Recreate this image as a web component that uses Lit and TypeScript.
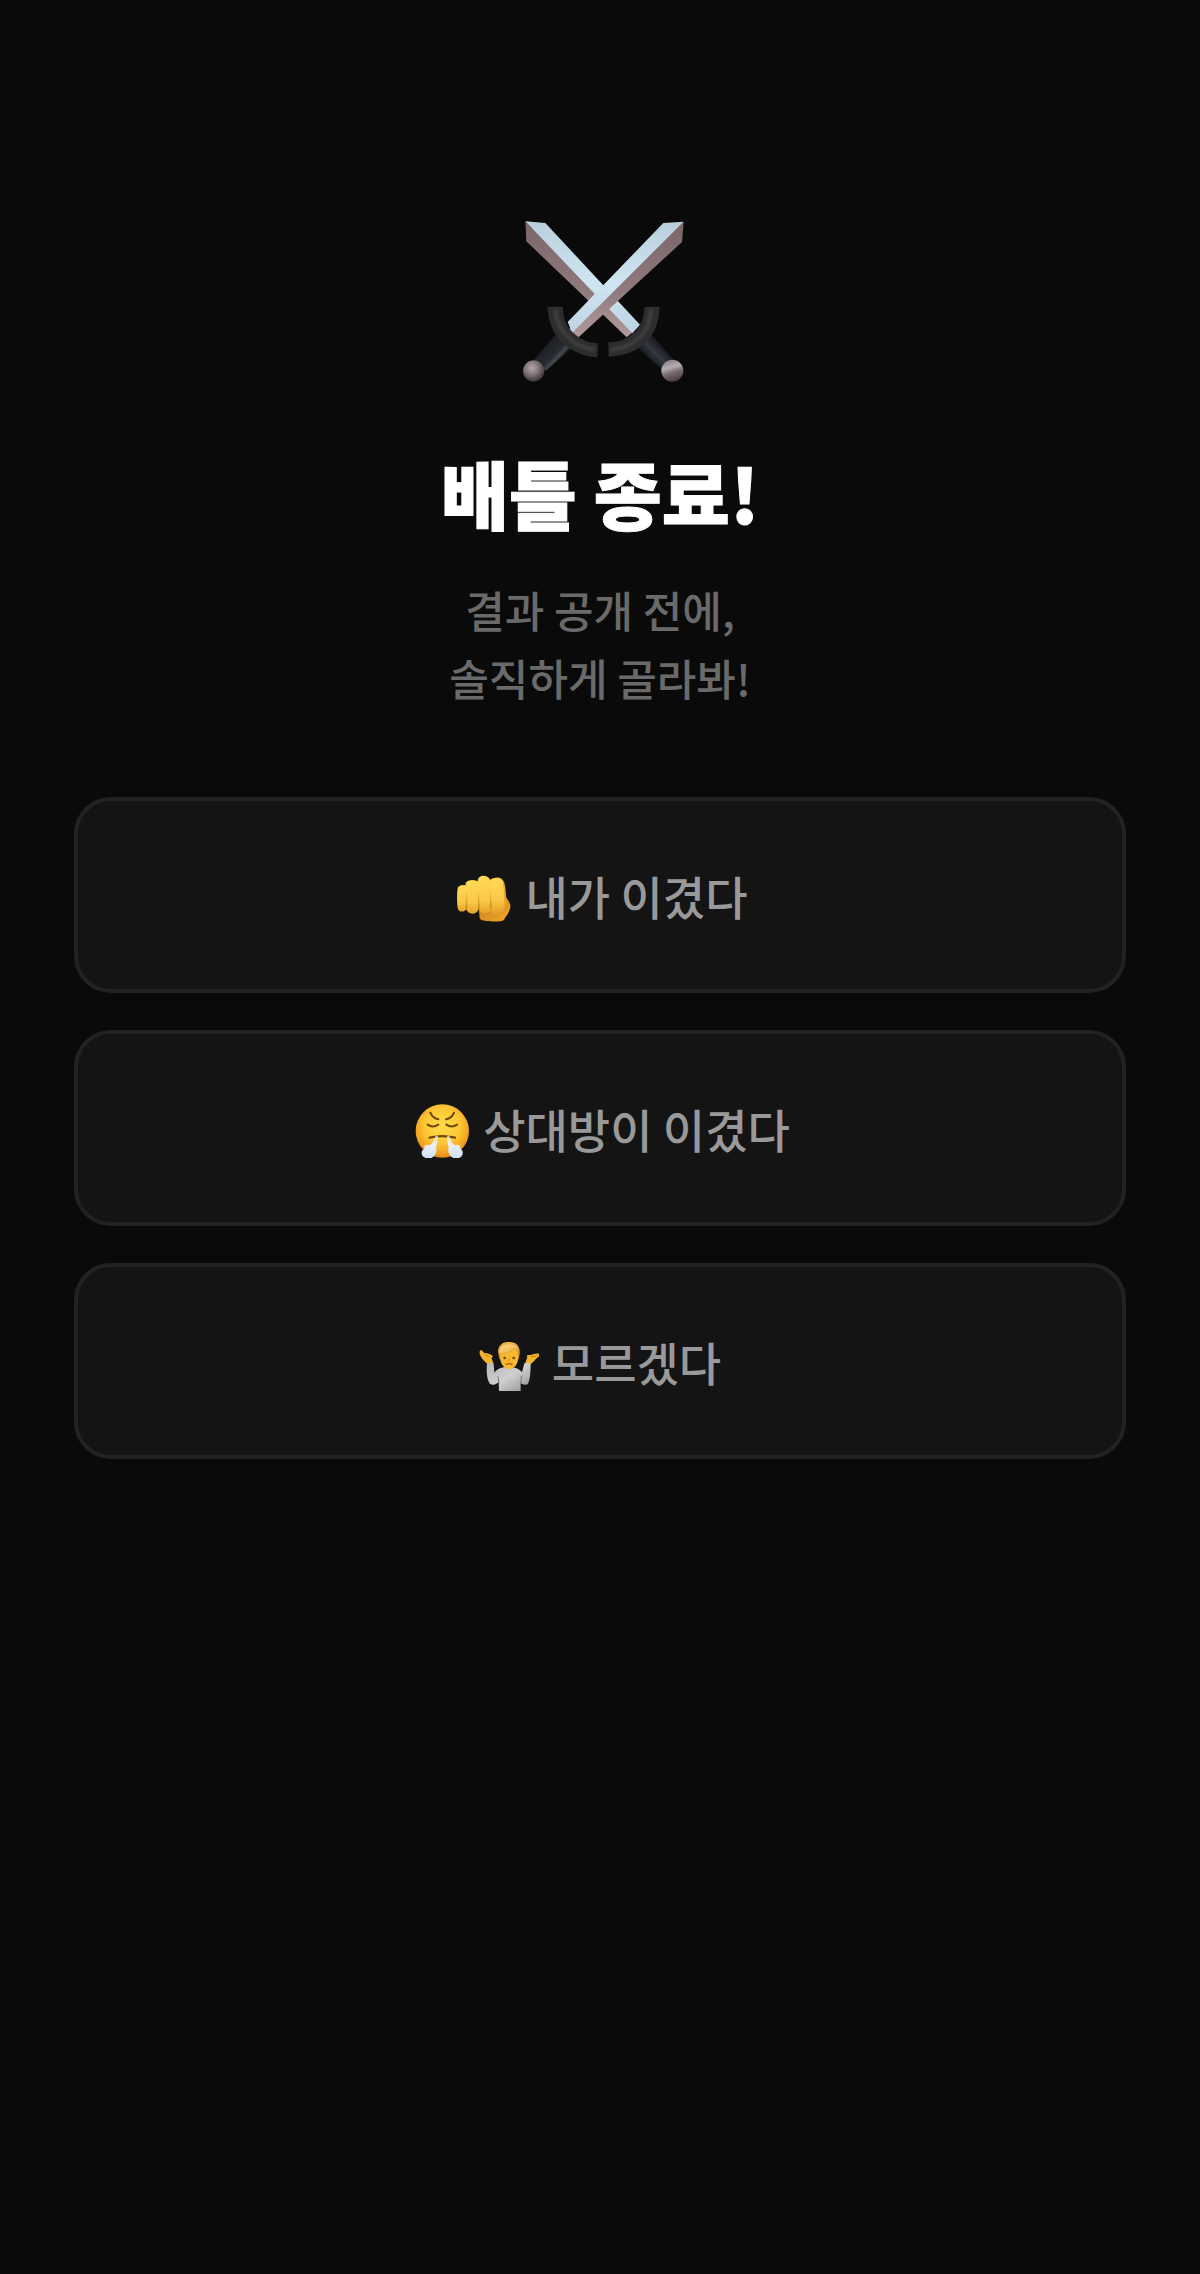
import { LitElement, html, css, svg, TemplateResult } from "lit";
import { customElement, state } from "lit/decorators.js";

interface Choice {
  id: string;
  label: string;
  icon: TemplateResult;
}

const swords = svg`
  <svg class="swords" viewBox="48 48 504 504" aria-hidden="true">
    <defs>
      <linearGradient id="light" x1="0" y1="0" x2="0" y2="1">
        <stop offset="0" stop-color="#b9cfdb" />
        <stop offset=".55" stop-color="#cfe5f2" />
        <stop offset="1" stop-color="#bdd3e2" />
      </linearGradient>
      <linearGradient id="dark" x1="0" y1="0" x2="0" y2="1">
        <stop offset="0" stop-color="#7a6468" />
        <stop offset=".6" stop-color="#8f7b7e" />
        <stop offset="1" stop-color="#b09a9b" />
      </linearGradient>
      <linearGradient id="gripR" gradientUnits="userSpaceOnUse" x1="445" y1="478" x2="485" y2="438">
        <stop offset="0" stop-color="#16181b" />
        <stop offset=".5" stop-color="#34383f" />
        <stop offset="1" stop-color="#17191d" />
      </linearGradient>
      <linearGradient id="gripL" gradientUnits="userSpaceOnUse" x1="134" y1="446" x2="174" y2="484">
        <stop offset="0" stop-color="#1d2024" />
        <stop offset=".6" stop-color="#272b31" />
        <stop offset=".85" stop-color="#454a52" />
        <stop offset="1" stop-color="#17191c" />
      </linearGradient>
      <radialGradient id="knobL" cx=".42" cy=".36" r=".62">
        <stop offset="0" stop-color="#b5a6a8" />
        <stop offset=".5" stop-color="#83777a" />
        <stop offset="1" stop-color="#40383a" />
      </radialGradient>
      <linearGradient id="knobR" x1=".3" y1="0" x2=".6" y2="1">
        <stop offset="0" stop-color="#817c84" />
        <stop offset=".35" stop-color="#b5adb3" />
        <stop offset=".6" stop-color="#796c70" />
        <stop offset="1" stop-color="#453b3e" />
      </linearGradient>
      <filter id="soft" x="-10%" y="-10%" width="120%" height="120%">
        <feGaussianBlur stdDeviation="4" />
      </filter>
    </defs>
    <path fill="url(#dark)" d="M76 64 L79 124 L380 412 L400 395 Z" />
    <path fill="url(#light)" d="M76 64 L136 69 L420 374 L397 400 Z" />
    <path fill="url(#gripR)" d="M406 437 L450 396 L523 482 L488 510 Z" />
    <path fill="#2d2d2d" d="M433 321 L478 320 C478 367 462 407 433 431 C403 456 370 468 326 470 L325 427 C358 427 382 417 403 397 C423 377 433 351 433 321 Z" />
    <path fill="none" stroke="#454444" stroke-width="9" filter="url(#soft)" d="M453 328 C451 364 438 396 413 417 C390 437 363 446 333 449" />
    <path fill="url(#dark)" d="M551 65 L546 126 L233 414 L205 390 Z" />
    <path fill="url(#light)" d="M551 65 L490 69 L203 366 C209 378 212 389 215 400 Z" />
    <path fill="url(#gripL)" d="M172 398 L222 440 L137 512 L101 481 Z" />
    <path fill="#2d2d2d" d="M142 320 L189 320 C188 352 198 377 218 397 C238 416 260 428 294 430 L292 472 C248 468 215 454 187 429 C158 401 145 363 142 320 Z" />
    <path fill="none" stroke="#454444" stroke-width="9" filter="url(#soft)" d="M166 328 C169 361 179 388 204 412 C228 434 256 446 286 449" />
    <circle cx="101" cy="513" r="32" fill="url(#knobL)" />
    <circle cx="517" cy="512" r="33" fill="url(#knobR)" />
  </svg>
`;

const fist = svg`
  <svg class="emoji" viewBox="21 1 180 180" aria-hidden="true">
    <defs>
      <linearGradient id="skin" x1="0" y1="0" x2="0" y2="1">
        <stop offset="0" stop-color="#ffda58" />
        <stop offset=".65" stop-color="#fbc846" />
        <stop offset="1" stop-color="#e5a22b" />
      </linearGradient>
      <linearGradient id="thumb" x1="0" y1="0" x2="1" y2="1">
        <stop offset="0" stop-color="#c07c15" />
        <stop offset="1" stop-color="#f4a92c" />
      </linearGradient>
      <linearGradient id="crease" x1="0" y1="0" x2="0" y2="1">
        <stop offset="0" stop-color="#d89427" stop-opacity=".1" />
        <stop offset="1" stop-color="#c5821d" />
      </linearGradient>
    </defs>
    <path fill="url(#thumb)" d="M98 140 L174 92 C184 104 194 114 193 126 C192 141 179 156 174 165 C170 173 119 171 106 166 C97 162 103 151 98 140 Z" />
    <path fill="#e9a52e" d="M130 47 C140 38 160 36 167 43 C180 51 178 83 182 105 C182 125 173 143 151 147 L128 140 Z" />
    <path fill="#e9b03a" d="M55 62 L133 50 L138 134 L58 134 Z" />
    <path fill="url(#skin)" d="M132 51 C140 36 163 37 169 49 C174 66 175 96 173 124 C170 148 137 149 133 130 Z" />
    <path fill="url(#skin)" d="M95 46 C100 29 122 31 131 43 C137 57 137 101 135 128 C133 151 104 152 98 134 Z" />
    <path fill="url(#skin)" d="M59 55 C67 43 90 45 96 52 C102 77 102 106 98 133 C93 152 65 151 61 134 Z" />
    <path fill="url(#skin)" d="M35 70 C41 59 52 60 60 63 C65 86 65 111 61 132 C55 145 37 143 35 129 C32 107 33 84 35 70 Z" />
    <path fill="url(#crease)" d="M59 85 L63 85 L64 132 L59 133 Z M95 80 L99 80 L101 135 L96 135 Z M132 78 L135 78 L137 131 L132 132 Z" />
  </svg>
`;

const huff = svg`
  <svg class="emoji" viewBox="9 9 180 180" aria-hidden="true">
    <defs>
      <radialGradient id="face" cx=".5" cy=".4" r=".6">
        <stop offset="0" stop-color="#ffdc48" />
        <stop offset=".55" stop-color="#fcc835" />
        <stop offset=".85" stop-color="#f2a21e" />
        <stop offset="1" stop-color="#df8716" />
      </radialGradient>
      <linearGradient id="steam" x1="0" y1="0" x2="0" y2="1">
        <stop offset="0" stop-color="#f4e8d4" stop-opacity=".7" />
        <stop offset=".4" stop-color="#eceff8" />
        <stop offset="1" stop-color="#cbdcf5" />
      </linearGradient>
    </defs>
    <circle cx="106" cy="108" r="80" fill="url(#face)" />
    <g fill="none" stroke="#70450b" stroke-width="6" stroke-linecap="round">
      <path d="M70 53 Q77 70 94 73" />
      <path d="M141 53 Q134 70 117 73" />
      <path d="M62 89 Q77 100 94 89" />
      <path d="M118 89 Q134 100 150 89" />
      <path d="M68 128 Q106 119 144 128" stroke-width="7" />
    </g>
    <path fill="url(#steam)" d="M86 121 L93 123 C92 139 91 149 87 157 C91 169 86 182 76 187 C71 196 56 195 53 187 C40 182 42 164 52 162 C49 151 59 147 68 151 C77 145 84 134 86 121 Z" />
    <path fill="url(#steam)" d="M127 121 L120 123 C121 139 122 149 125 157 C121 169 126 182 136 187 C141 196 156 195 159 187 C171 182 169 164 160 162 C163 151 153 147 144 151 C135 145 129 134 127 121 Z" />
  </svg>
`;

const shrug = svg`
  <svg class="emoji" viewBox="18 -2 180 180" aria-hidden="true">
    <defs>
      <linearGradient id="shirt" x1="0" y1="0" x2="1" y2="1">
        <stop offset="0" stop-color="#b7b7b9" />
        <stop offset=".5" stop-color="#cfcfd1" />
        <stop offset="1" stop-color="#8b8b8e" />
      </linearGradient>
      <linearGradient id="hair" x1="0" y1="0" x2="0" y2="1">
        <stop offset="0" stop-color="#f3c050" />
        <stop offset="1" stop-color="#bd761a" />
      </linearGradient>
      <linearGradient id="fringe" x1="0" y1="0" x2="1" y2="1">
        <stop offset="0" stop-color="#ffe191" />
        <stop offset="1" stop-color="#e5a637" />
      </linearGradient>
    </defs>
    <path fill="#f3b32c" d="M44 98 C37 90 28 84 24 75 C18 66 19 54 25 55 L34 64 C44 64 56 68 60 75 C52 78 58 84 62 96 Z" />
    <path fill="#c47b17" d="M29 66 Q42 70 55 75 Q43 77 29 66 Z" />
    <path fill="#f3b32c" d="M156 97 L163 76 C158 70 166 69 173 70 C181 68 193 63 200 68 C203 75 190 77 186 85 C181 91 176 94 172 99 Z" />
    <path fill="#c47b17" d="M169 74 Q183 73 195 69 Q184 80 169 74 Z" />
    <path fill="url(#shirt)" d="M42 96 Q52 90 62 96 L64 123 C73 111 88 106 103 106 C124 106 138 111 147 122 L154 95 Q163 92 173 98 C173 121 171 146 165 156 C159 162 149 159 143 155 L143 178 Q111 184 78 178 L77 151 C68 160 57 162 51 156 C41 145 40 117 42 96 Z" />
    <path fill="none" stroke="#77777a" stroke-width="3" d="M75 134 L78 155 M146 132 L143 157" />
    <path fill="url(#hair)" d="M76 66 C71 43 90 30 106 31 C129 29 143 43 140 68 L137 83 L79 83 Z" />
    <path fill="#f9b92e" d="M81 64 C101 62 115 58 125 52 C132 57 136 65 136 76 C135 100 123 112 108 113 C92 111 79 95 81 64 Z" />
    <path fill="url(#fringe)" stroke="#c98722" stroke-width="1" d="M78 66 C77 43 93 35 111 37 C126 36 135 45 137 61 Q129 58 124 51 Q105 67 78 66 Z" />
    <circle cx="95" cy="79" r="4" fill="#70450b" />
    <circle cx="122" cy="79" r="4" fill="#70450b" />
    <path fill="none" stroke="#9e5a12" stroke-width="4" stroke-linecap="round" d="M99 98 Q108 94 117 98" />
    <path fill="none" stroke="#d48b1c" stroke-width="3" d="M108 79 L108 88" />
  </svg>
`;

const choices: Choice[] = [
  { id: "me", label: "내가 이겼다", icon: fist },
  { id: "opponent", label: "상대방이 이겼다", icon: huff },
  { id: "unknown", label: "모르겠다", icon: shrug },
];

@customElement("app-root")
export class AppRoot extends LitElement {
  @state() private selected = "";

  static styles = css`
    :host {
      display: block;
      min-height: 100vh;
      box-sizing: border-box;
      background: #0a0a0a;
      font-family: "Noto Sans CJK KR", "Noto Sans", sans-serif;
    }
    .page {
      display: flex;
      flex-direction: column;
      align-items: center;
      padding: 216px 74px 74px;
    }
    .swords {
      display: block;
      width: 168px;
      height: 168px;
    }
    .title {
      margin: 64px 0 0;
      color: #fff;
      font-size: 74px;
      font-weight: 900;
      line-height: 88px;
      -webkit-text-stroke: 1px #fff;
    }
    .lead {
      margin: 39px 0 0;
      color: #6a6a6a;
      font-size: 43px;
      font-weight: 500;
      line-height: 68px;
      text-align: center;
    }
    .choices {
      display: flex;
      flex-direction: column;
      align-self: stretch;
      gap: 37px;
      margin-top: 86px;
    }
    .choice {
      display: flex;
      align-items: center;
      justify-content: center;
      gap: 13px;
      padding: 60px;
      border: 4px solid #222;
      border-radius: 37px;
      background: #141414;
      color: #999;
      font-family: inherit;
      font-size: 46px;
      font-weight: 500;
      line-height: 68px;
      cursor: pointer;
    }
    .choice.selected {
      border-color: #999;
    }
    .emoji {
      display: block;
      flex: none;
      width: 60px;
      height: 60px;
    }
  `;

  render() {
    return html`
      <main class="page">
        ${swords}
        <h1 class="title">배틀 종료!</h1>
        <p class="lead">결과 공개 전에,<br />솔직하게 골라봐!</p>
        <div class="choices">
          ${choices.map(
            (choice) => html`
              <button
                type="button"
                class="choice ${this.selected === choice.id ? "selected" : ""}"
                @click=${() => (this.selected = choice.id)}
              >
                ${choice.icon}<span>${choice.label}</span>
              </button>
            `,
          )}
        </div>
      </main>
    `;
  }
}
